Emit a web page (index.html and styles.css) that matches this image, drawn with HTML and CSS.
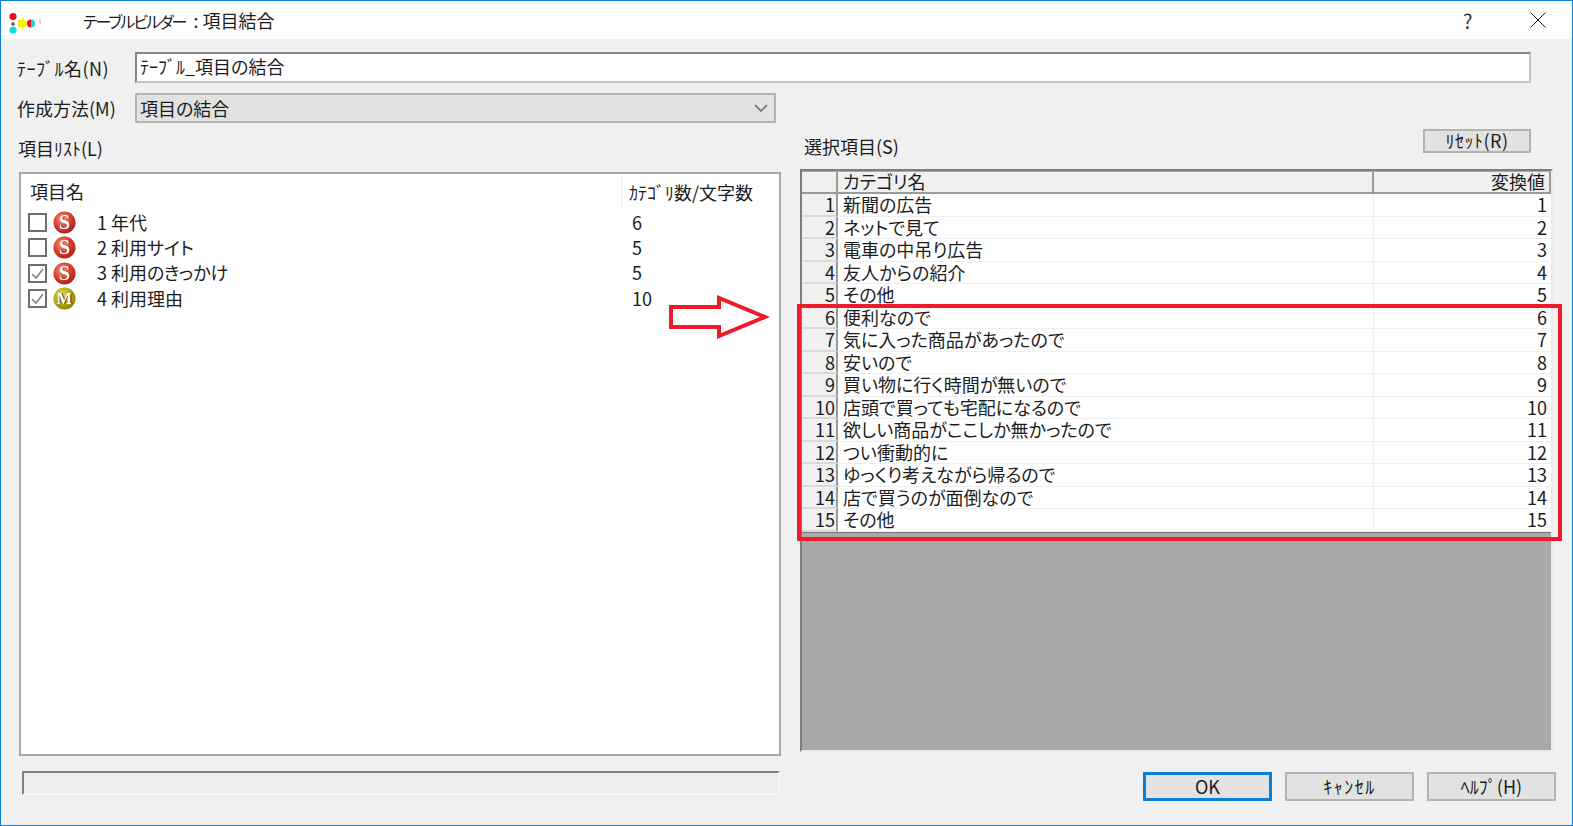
FILE: index.html
```html
<!DOCTYPE html>
<html lang="ja">
<head>
<meta charset="utf-8">
<title>テーブルビルダー：項目結合</title>
<link rel="stylesheet" href="styles.css">
</head>
<body>
<div class="window">
  <header class="titlebar">
    <svg class="app-icon" width="40" height="30" viewBox="0 0 40 30">
      <circle cx="9" cy="11.500" r="3.600" fill="#ee1122"/>
      <path d="M9 17v4M7 19h4" stroke="#222" stroke-width="1" fill="none"/>
      <circle cx="9" cy="25" r="3.600" fill="#18d8dc"/>
      <path d="M14 15h4v-3l6 6.500-6 6.500v-3h-4z" fill="#f6ee10"/>
      <path d="M27 14.500a4 4 0 0 0 0 8z" fill="#ee1122"/>
      <path d="M27 14.500a4 4 0 0 1 0 8z" fill="#18d8dc"/>
      <path d="M36 14v5" stroke="#c9a77c" stroke-width="1"/>
    </svg>
    <span class="title-text"><span class="title-kana">テーブルビルダー</span> : 項目結合</span>
    <span class="title-help">?</span>
    <svg class="title-close" width="16" height="16" viewBox="0 0 16 16"><path d="M.5.500l15 15M15.500.500l-15 15" stroke="#222" stroke-width="1" fill="none"/></svg>
  </header>

  <main class="content">
    <div class="form-row form-row-name">
      <label class="form-label form-label-kana">ﾃｰﾌﾞﾙ名(N)</label>
      <div class="text-input">ﾃｰﾌﾞﾙ_項目の結合</div>
    </div>
    <div class="form-row form-row-method">
      <label class="form-label">作成方法(M)</label>
      <div class="select-box">
        <span>項目の結合</span>
        <svg width="14" height="8" viewBox="0 0 14 8"><path d="M1 1l6 6 6-6" stroke="#666" stroke-width="1.500" fill="none"/></svg>
      </div>
    </div>

    <div class="columns">
      <section class="col-left">
        <div class="list-label">項目ﾘｽﾄ(L)</div>
        <div class="list-box">
          <div class="list-head">
            <span class="list-head-name">項目名</span>
            <span class="list-head-count">ｶﾃｺﾞﾘ数/文字数</span>
          </div>
          <div class="list-row">
            <span class="check"></span>
            <svg class="badge" viewBox="0 0 24 24"><defs><radialGradient id="rs" cx="40%" cy="35%" r="70%"><stop offset="0" stop-color="#f49a80"/><stop offset=".55" stop-color="#dc4030"/><stop offset="1" stop-color="#a81c18"/></radialGradient></defs><circle cx="12" cy="12" r="11.500" fill="url(#rs)"/><text x="13" y="19" class="badge-text badge-shadow">S</text><text x="12" y="18.500" class="badge-text">S</text></svg>
            <span class="item-name">1 年代</span>
            <span class="item-count">6</span>
          </div>
          <div class="list-row">
            <span class="check"></span>
            <svg class="badge" viewBox="0 0 24 24"><circle cx="12" cy="12" r="11.500" fill="url(#rs)"/><text x="13" y="19" class="badge-text badge-shadow">S</text><text x="12" y="18.500" class="badge-text">S</text></svg>
            <span class="item-name">2 利用サイト</span>
            <span class="item-count">5</span>
          </div>
          <div class="list-row">
            <span class="check"><svg width="15" height="15" viewBox="0 0 15 15"><path d="M2 8l4 4 7-9" stroke="#808080" stroke-width="1.600" fill="none"/></svg></span>
            <svg class="badge" viewBox="0 0 24 24"><circle cx="12" cy="12" r="11.500" fill="url(#rs)"/><text x="13" y="19" class="badge-text badge-shadow">S</text><text x="12" y="18.500" class="badge-text">S</text></svg>
            <span class="item-name">3 利用のきっかけ</span>
            <span class="item-count">5</span>
          </div>
          <div class="list-row">
            <span class="check"><svg width="15" height="15" viewBox="0 0 15 15"><path d="M2 8l4 4 7-9" stroke="#808080" stroke-width="1.600" fill="none"/></svg></span>
            <svg class="badge" viewBox="0 0 24 24"><defs><radialGradient id="ym" cx="40%" cy="35%" r="70%"><stop offset="0" stop-color="#e4dc60"/><stop offset=".55" stop-color="#b8ac18"/><stop offset="1" stop-color="#7f7a10"/></radialGradient></defs><circle cx="12" cy="12" r="11.500" fill="url(#ym)"/><text x="13" y="18" class="badge-text badge-text-m badge-shadow">M</text><text x="12" y="17.500" class="badge-text badge-text-m">M</text></svg>
            <span class="item-name">4 利用理由</span>
            <span class="item-count">10</span>
          </div>
        </div>
        <div class="status-bar"></div>
      </section>

      <section class="col-right">
        <div class="right-head">
          <span class="right-label">選択項目(S)</span>
          <button class="btn btn-reset">ﾘｾｯﾄ(R)</button>
        </div>
        <div class="data-grid">
          <div class="grid-rows">
            <div class="grid-row grid-header"><span class="cell-no"></span><span class="cell-name">カテゴリ名</span><span class="cell-val">変換値</span></div>
            <div class="grid-row"><span class="cell-no">1</span><span class="cell-name">新聞の広告</span><span class="cell-val">1</span></div>
            <div class="grid-row"><span class="cell-no">2</span><span class="cell-name">ネットで見て</span><span class="cell-val">2</span></div>
            <div class="grid-row"><span class="cell-no">3</span><span class="cell-name">電車の中吊り広告</span><span class="cell-val">3</span></div>
            <div class="grid-row"><span class="cell-no">4</span><span class="cell-name">友人からの紹介</span><span class="cell-val">4</span></div>
            <div class="grid-row"><span class="cell-no">5</span><span class="cell-name">その他</span><span class="cell-val">5</span></div>
            <div class="grid-row"><span class="cell-no">6</span><span class="cell-name">便利なので</span><span class="cell-val">6</span></div>
            <div class="grid-row"><span class="cell-no">7</span><span class="cell-name">気に入った商品があったので</span><span class="cell-val">7</span></div>
            <div class="grid-row"><span class="cell-no">8</span><span class="cell-name">安いので</span><span class="cell-val">8</span></div>
            <div class="grid-row"><span class="cell-no">9</span><span class="cell-name">買い物に行く時間が無いので</span><span class="cell-val">9</span></div>
            <div class="grid-row"><span class="cell-no">10</span><span class="cell-name">店頭で買っても宅配になるので</span><span class="cell-val">10</span></div>
            <div class="grid-row"><span class="cell-no">11</span><span class="cell-name">欲しい商品がここしか無かったので</span><span class="cell-val">11</span></div>
            <div class="grid-row"><span class="cell-no">12</span><span class="cell-name">つい衝動的に</span><span class="cell-val">12</span></div>
            <div class="grid-row"><span class="cell-no">13</span><span class="cell-name">ゆっくり考えながら帰るので</span><span class="cell-val">13</span></div>
            <div class="grid-row"><span class="cell-no">14</span><span class="cell-name">店で買うのが面倒なので</span><span class="cell-val">14</span></div>
            <div class="grid-row"><span class="cell-no">15</span><span class="cell-name">その他</span><span class="cell-val">15</span></div>
          </div>
        </div>
        <div class="actions">
          <button class="btn btn-action btn-default">OK</button>
          <button class="btn btn-action btn-cancel">ｷｬﾝｾﾙ</button>
          <button class="btn btn-action">ﾍﾙﾌﾟ(H)</button>
        </div>
      </section>
    </div>

    <svg class="callout-arrow" width="102" height="44" viewBox="0 0 102 44"><path d="M3 12h48V3l46 19-46 19v-9H3z" fill="#fff" stroke="#ee1c2b" stroke-width="4"/></svg>
    <div class="callout-box"></div>
  </main>
</div>
</body>
</html>
```
FILE: styles.css
```css
* { box-sizing: border-box; }
html, body { margin: 0; padding: 0; }
body {
  width: 1573px;
  height: 826px;
  overflow: hidden;
  font-family: "Liberation Sans Narrow", "Noto Sans CJK JP", "Noto Sans", sans-serif;
  font-size: 18px;
  font-feature-settings: "palt";
  color: #1c1c1c;
  background: #eff0ef;
}
.window {
  width: 1573px;
  height: 826px;
  border: 1px solid #0a7fd8;
  display: flex;
  flex-direction: column;
}
.titlebar {
  height: 38px;
  flex: none;
  background: #fff;
  display: flex;
  align-items: center;
  padding-left: 3px;
}
.app-icon { flex: none; }
.title-text { margin-left: 39px; flex: 1; line-height: 38px; }
.title-kana { font-size: 16px; letter-spacing: -2px; margin-right: 4px; }
.title-help { width: 67px; font-size: 20px; color: #333; }
.title-close { margin-right: 26px; }

.content {
  flex: 1;
  position: relative;
  background: #eff0ef;
  padding-top: 13px;
}
.form-row { display: flex; align-items: center; padding-left: 16px; }
.form-row-name { height: 31px; padding-right: 41px; }
.form-row-method { height: 30px; margin-top: 10px; }
.form-label { width: 118px; flex: none; line-height: 24px; }
.form-label-kana { letter-spacing: .5px; }
.text-input {
  flex: 1;
  height: 31px;
  background: #fff;
  border: 2px solid;
  border-color: #868686 #c4c4c4 #c4c4c4 #868686;
  padding-left: 3px;
  line-height: 24px;
}
.select-box {
  width: 641px;
  height: 30px;
  background: #e1e2e1;
  border: 2px solid #b2b3b2;
  display: flex;
  align-items: center;
  justify-content: space-between;
  padding: 0 6px 0 3px;
}

.columns {
  display: flex;
  gap: 19px;
  margin-top: 6px;
  padding-left: 18px;
}
.col-left { width: 762px; flex: none; }
.list-label { height: 43px; line-height: 39px; margin-left: -1px; }
.list-box {
  height: 584px;
  background: #fff;
  border: 2px solid #a3a6aa;
}
.list-head {
  height: 36px;
  display: flex;
  align-items: center;
}
.list-head-name { margin-left: 9px; width: 591px; margin-bottom: 2px; }
.list-head-count {
  border-left: 1px solid #ececec;
  padding-left: 7px;
  height: 35px;
  line-height: 35px;
  white-space: nowrap;
}
.list-row {
  height: 25.300px;
  display: flex;
  align-items: center;
}
.check {
  width: 19px;
  height: 19px;
  margin-left: 7px;
  flex: none;
  border: 2px solid #6e6e6e;
  background: #fff;
  display: flex;
  align-items: center;
  justify-content: center;
}
.badge { width: 23px; height: 23px; margin-left: 6px; flex: none; }
.badge-text {
  font-family: "Liberation Serif", serif;
  font-weight: 700;
  font-size: 21px;
  fill: #fff;
  text-anchor: middle;
}
.badge-shadow { fill: #5a1410; }
.badge-text-m { font-size: 17px; }
.item-name { margin-left: 21px; width: 535px; white-space: nowrap; margin-bottom: 2px; }
.item-count { margin-bottom: 2px; }
.status-bar {
  width: 758px;
  height: 24px;
  margin: 15px 0 0 3px;
  background: #eceeec;
  border: 2px solid;
  border-color: #7f807e #f6f6f6 #f6f6f6 #7f807e;
}

.col-right { width: 756px; flex: none; }
.right-head {
  height: 40px;
  display: flex;
  align-items: flex-start;
  justify-content: space-between;
  padding: 0 25px 0 4px;
}
.right-label { line-height: 34px; }
.btn {
  font-family: inherit;
  font-size: 18px;
  font-feature-settings: inherit;
  color: #1c1c1c;
  background: #e1e2e1;
  border: 2px solid #b2b3b2;
  padding: 0 0 2px;
}
.btn-reset { width: 108px; height: 24px; line-height: 18px; letter-spacing: .5px; }
.data-grid {
  width: 753px;
  height: 583px;
  background: #a9aaa8;
  border: 2px solid;
  border-color: #7d7e7c #e9eae9 #e9eae9 #7d7e7c;
  padding-top: 1px;
}
.grid-rows {
  display: grid;
  grid-auto-rows: 22.500px;
  grid-template-rows: 22px;
  border-bottom: 1px solid #777;
  background: #fff;
}
.grid-row {
  display: grid;
  grid-template-columns: 36px 536px 1fr;
  line-height: 20px;
  white-space: nowrap;
}
.cell-no {
  background: #eff0ef;
  border-bottom: 2px solid #d8d9d8;
  border-right: 2px solid #9b9c9a;
  text-align: right;
  padding-right: 1px;
}
.cell-name {
  padding-left: 5px;
  border-bottom: 1px solid #efefef;
  border-right: 1px solid #efefef;
}
.cell-val {
  text-align: right;
  padding-right: 4px;
  border-bottom: 1px solid #efefef;
}
.grid-header .cell-name, .grid-header .cell-val {
  background: #eff0ef;
  border-bottom: 2px solid #9b9c9a;
  border-right: 2px solid #9b9c9a;
  line-height: 19px;
}
.grid-header .cell-no { border-bottom-color: #9b9c9a; }

.actions {
  display: flex;
  justify-content: flex-end;
  gap: 13px;
  margin-top: 20px;
}
.btn-action { width: 129px; height: 29px; line-height: 22px; }
.btn-default { border: 3px solid #0a7fd8; }
.btn-cancel { letter-spacing: 1.500px; }

.callout-arrow { position: absolute; left: 667px; top: 256px; }
.callout-box {
  position: absolute;
  left: 796px;
  top: 265px;
  width: 765px;
  height: 237px;
  border: 4px solid #ee1c2b;
}
```
